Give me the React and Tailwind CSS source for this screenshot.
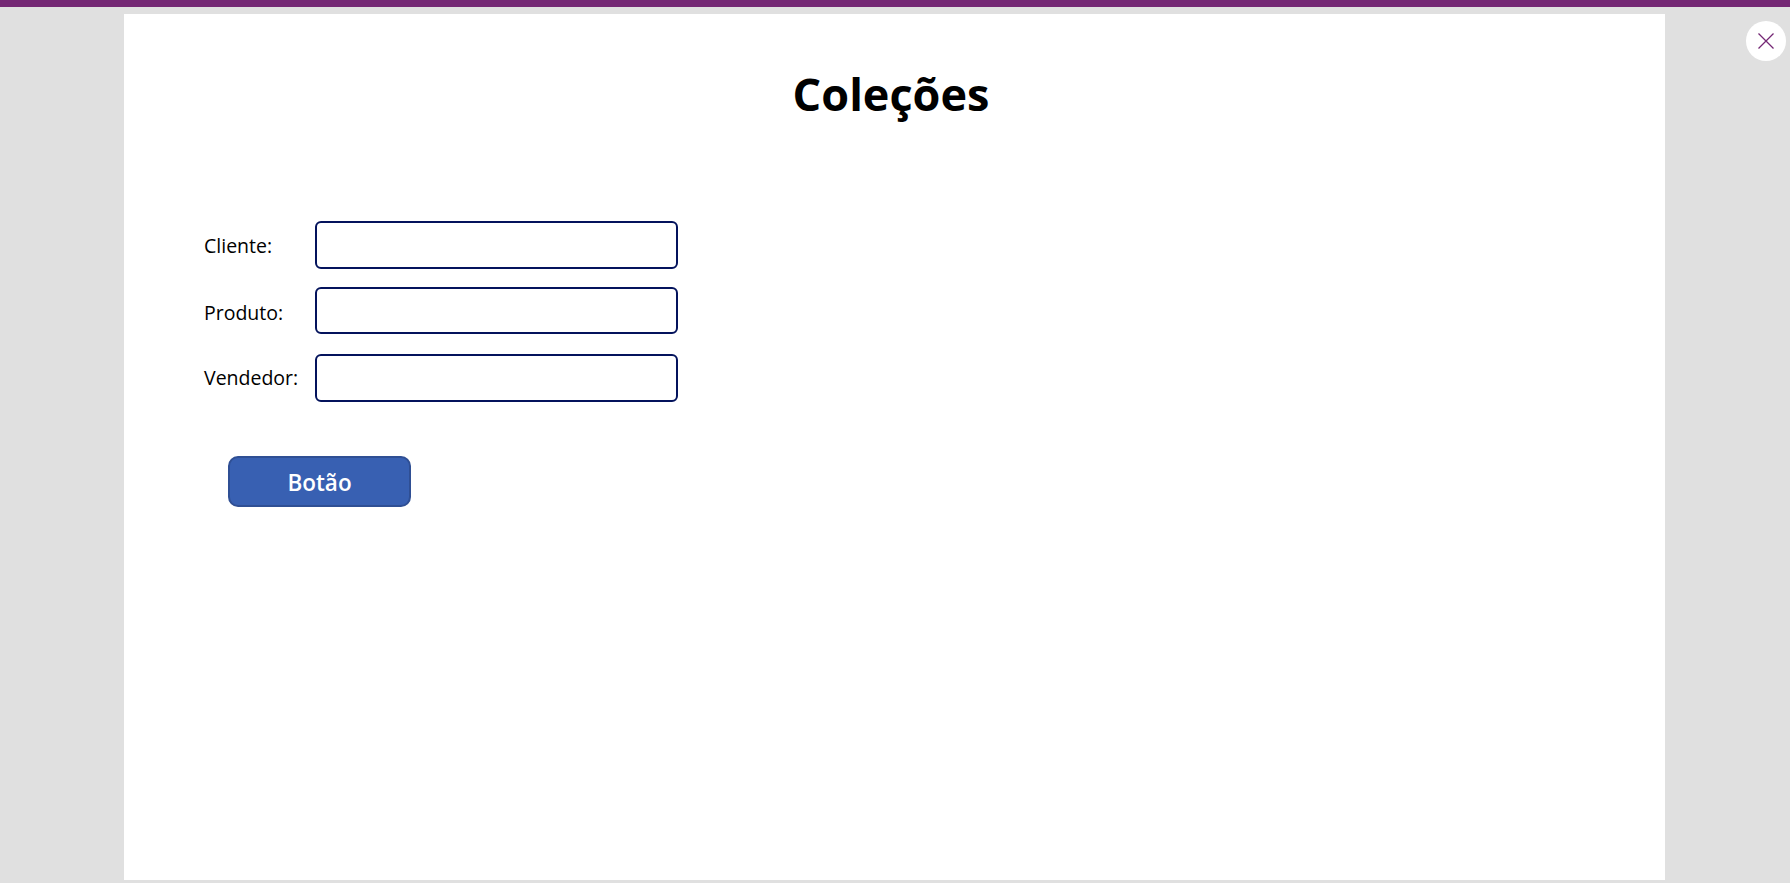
const fields = [
  { label: "Cliente:", height: "h-[48px]", margin: "", labelMargin: "" },
  { label: "Produto:", height: "h-[47px]", margin: "mt-[18px]", labelMargin: "mt-[4px]" },
  { label: "Vendedor:", height: "h-[48px]", margin: "mt-[20px]", labelMargin: "mb-[2px]" },
];

const App = () => {
  return (
    <div className="relative flex flex-col h-[883px] w-full overflow-hidden bg-[#e0e0e0] font-['Open_Sans',sans-serif] text-black">
      <div className="h-[7px] shrink-0 bg-[#742774]" />

      <div className="flex-1 pt-[7px] pb-[3px] pl-[124px]">
        <div className="h-full w-[1541px] bg-white pl-[80px]">
          <h1 className="pt-[53px] pr-[87px] text-center text-[45px] leading-[54px] font-bold">Coleções</h1>

          <div className="mt-[100px] flex flex-col">
            {fields.map((field) => (
              <div key={field.label} className={`flex items-center ${field.margin}`}>
                <label className={`w-[111px] text-[19.5px] leading-[27px] ${field.labelMargin}`}>{field.label}</label>
                <input
                  type="text"
                  className={`${field.height} w-[363px] rounded-[6px] border-2 border-[#04135c] bg-white`}
                />
              </div>
            ))}
          </div>

          <button className="mt-[54px] ml-[24px] block h-[51px] w-[183px] rounded-[10px] border-2 border-[#2f4f94] bg-[#3860b2] pt-[2px] text-[22.5px] font-semibold text-white">
            Botão
          </button>
        </div>
      </div>

      {/* Close button */}
      <button className="absolute top-[21px] left-[1746px] flex h-[40px] w-[40px] items-center justify-center rounded-full bg-white">
        <svg width="16" height="16" viewBox="0 0 16 16" fill="none" stroke="#742774" strokeWidth="1.3">
          <path d="M0.5 0.5L15.5 15.5M15.5 0.5L0.5 15.5" />
        </svg>
      </button>
    </div>
  );
};

export default App;
